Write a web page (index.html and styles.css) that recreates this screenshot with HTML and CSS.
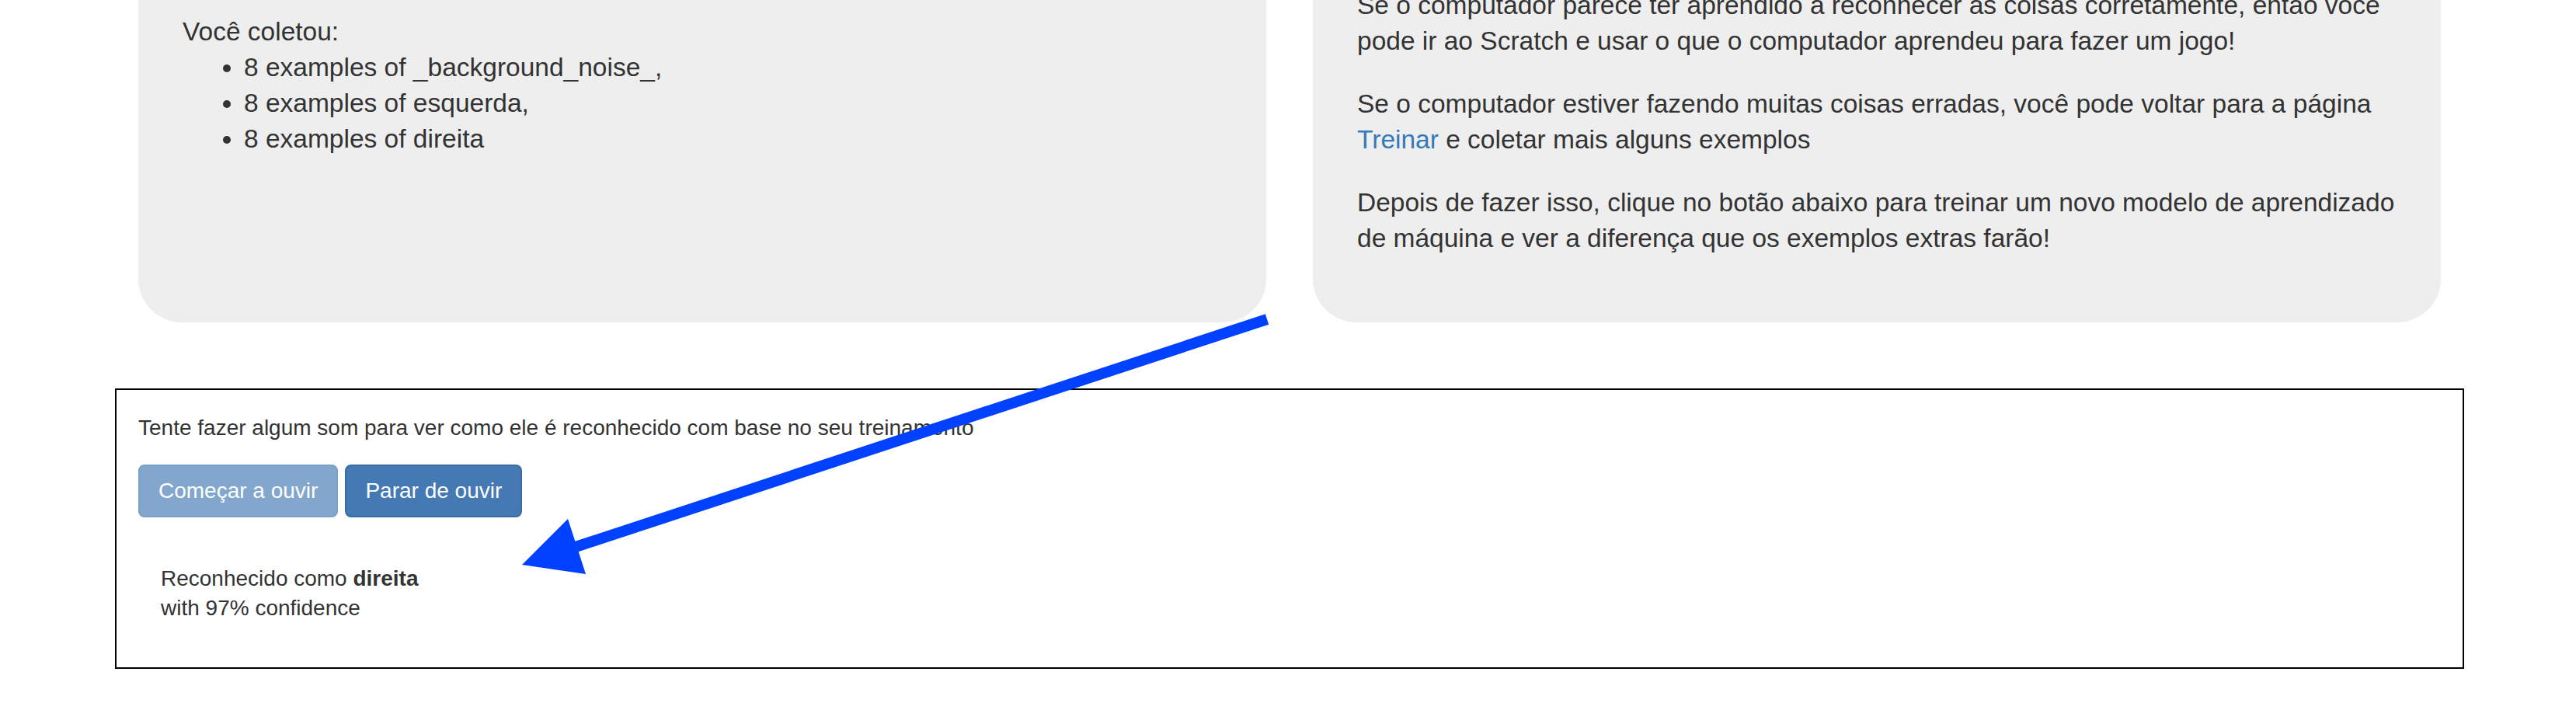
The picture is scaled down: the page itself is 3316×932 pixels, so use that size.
FILE: index.html
```html
<!DOCTYPE html>
<html lang="pt">
<head>
<meta charset="utf-8">
<title>Reconhecer</title>
<link rel="stylesheet" href="styles.css">
</head>
<body>
<div class="page">
  <div class="cards">
    <div class="card card-left">
      <p class="collected">Você coletou:</p>
      <ul class="examples">
        <li>8 examples of _background_noise_,</li>
        <li>8 examples of esquerda,</li>
        <li>8 examples of direita</li>
      </ul>
    </div>
    <div class="card card-right">
      <p>Se o computador parece ter aprendido a reconhecer as coisas corretamente, então você pode ir ao Scratch e usar o que o computador aprendeu para fazer um jogo!</p>
      <p>Se o computador estiver fazendo muitas coisas erradas, você pode voltar para a página <a class="link" href="#">Treinar</a> e coletar mais alguns exemplos</p>
      <p>Depois de fazer isso, clique no botão abaixo para treinar um novo modelo de aprendizado de máquina e ver a diferença que os exemplos extras farão!</p>
    </div>
  </div>
  <div class="test-box">
    <p class="prompt">Tente fazer algum som para ver como ele é reconhecido com base no seu treinamento</p>
    <div class="buttons">
      <button class="btn btn-disabled" type="button">Começar a ouvir</button>
      <button class="btn btn-primary" type="button">Parar de ouvir</button>
    </div>
    <div class="result">
      <div>Reconhecido como <strong>direita</strong></div>
      <div>with 97% confidence</div>
    </div>
  </div>
</div>
<svg class="annotation" width="3316" height="932" viewBox="0 0 3316 932" xmlns="http://www.w3.org/2000/svg">
  <line x1="1631" y1="411" x2="738" y2="705" stroke="#0040ff" stroke-width="14"/>
  <polygon points="672,727 731,668 754,739" fill="#0040ff"/>
</svg>
</body>
</html>
```
FILE: styles.css
```css
html, body {
  margin: 0;
  padding: 0;
  background: #fff;
  overflow: hidden;
}

body {
  font-family: "Liberation Sans", Arial, Helvetica, sans-serif;
  color: #333;
}

.page {
  width: 3024px;
  margin: -100px 0 0 148px;
}

.cards {
  display: flex;
  gap: 60px;
  padding: 0 30px;
}

.card {
  flex: 1 1 0;
  background: #eeeeee;
  border-radius: 0 0 56px 56px;
  font-size: 33.5px;
  line-height: 46px;
  padding: 84px 40px 50px 57px;
}

.card-left {
  padding-top: 118px;
}

.card p {
  margin: 0 0 35px;
}

.card p.collected {
  margin: 0;
}

.examples {
  margin: 0;
  padding-left: 79px;
}

.link {
  color: #337ab7;
  text-decoration: none;
}

.test-box {
  margin-top: 85px;
  border: 2px solid #000;
  padding: 30px 28px 30px;
  font-size: 28px;
  line-height: 37px;
}

.prompt {
  margin: 0 0 29px;
}

.buttons {
  display: flex;
  gap: 9px;
}

.btn {
  font-family: "Liberation Sans", Arial, Helvetica, sans-serif;
  font-size: 28px;
  line-height: 40px;
  padding: 12px 24px;
  border: 2px solid transparent;
  border-radius: 8px;
  color: #fff;
  margin: 0;
}

.btn-disabled {
  background: #82a6cc;
  border-color: #7a9fc8;
}

.btn-primary {
  background: #4579b4;
  border-color: #3a6ba3;
}

.result {
  margin: 60px 0 27px;
  padding-left: 29px;
  line-height: 38px;
}

.result strong {
  font-weight: bold;
}

.annotation {
  position: absolute;
  top: 0;
  left: 0;
  pointer-events: none;
}
```
